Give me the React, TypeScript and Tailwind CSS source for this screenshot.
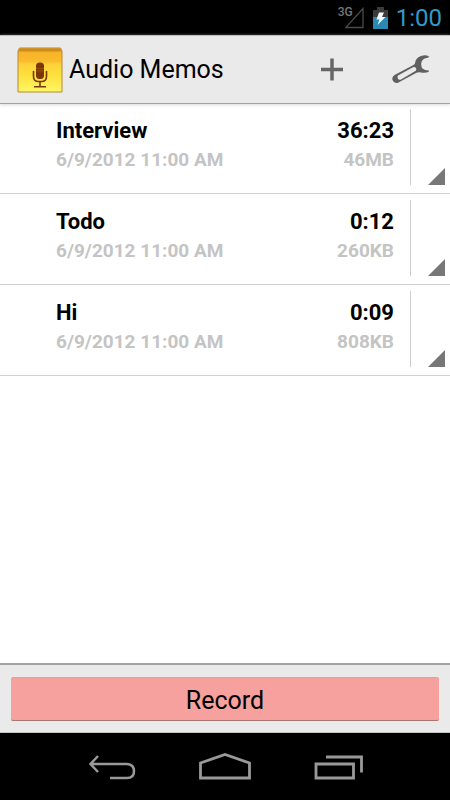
const memos = [
    { title: "Interview", date: "6/9/2012 11:00 AM", length: "36:23", size: "46MB" },
    { title: "Todo", date: "6/9/2012 11:00 AM", length: "0:12", size: "260KB" },
    { title: "Hi", date: "6/9/2012 11:00 AM", length: "0:09", size: "808KB" },
]

const StatusBar = () => {
    return (
        <div className="flex h-[35px] shrink-0 items-center justify-end bg-black pr-2">
            <span className="self-start pt-1 text-[12px] leading-4 font-medium text-[#777777]">3G</span>
            <svg className="mr-2 -ml-2" width="20" height="22" viewBox="0 0 20 22" fill="none">
                <path d="M18 1.500V20.500H0.800Z" stroke="#4a4a4a" strokeWidth="1.3" />
            </svg>
            <svg className="mr-2" width="15" height="22" viewBox="0 0 15 22">
                <path d="M4 0h7v3h4v8H0V3h4z" fill="#3b3b3b" />
                <path d="M0 10h15v12H0z" fill="#2a89b2" />
                <path d="M6 5.500h5L9 10h3.500L4.500 18l2-5.500H3.500z" fill="#f4f8fa" />
            </svg>
            <span className="text-[24px] leading-8 text-[#3598c8]">1:00</span>
        </div>
    )
}

const MemoIcon = () => {
    return (
        <svg width="46" height="46" viewBox="0 0 46 46">
            <defs>
                <linearGradient id="note" x1="0" y1="0" x2="0" y2="1">
                    <stop offset="0" stopColor="#f5b02a" />
                    <stop offset="0.3" stopColor="#fabb2c" />
                    <stop offset="0.36" stopColor="#fdd03a" />
                    <stop offset="0.6" stopColor="#fde03c" />
                    <stop offset="1" stopColor="#fff766" />
                </linearGradient>
            </defs>
            <path d="M1 4L2.500 1H43.500L45 4V45H1z" fill="url(#note)" stroke="#b5893a" />
            <path d="M1.500 4.500L3 1.500H43L44.500 4.500z" fill="#cf8a1c" />
            <rect x="19" y="15.500" width="8" height="16.500" rx="3.500" fill="#7c3605" />
            <path d="M19 21.500h8M19 24h8" stroke="#a8601a" strokeWidth="0.6" />
            <path d="M16.500 24v5.500q0 5 5 5h3q5 0 5-5V24M23 34.500v5M17 39.800h12" fill="none" stroke="#7c3605" strokeWidth="1.600" />
        </svg>
    )
}

const Header = () => {
    return (
        <header className="relative flex h-[69px] shrink-0 items-center border-t border-b border-t-[#bcbcbc] border-b-[#a2a2a2] bg-[#eaeaea] pr-[19px] pl-[17px] shadow-[0_1px_3px_#dcd6dc]">
            <MemoIcon />
            <h1 className="ml-1.5 flex-1 text-[25px] leading-8 text-black">Audio Memos</h1>
            <button aria-label="Add memo" className="mr-12">
                <svg width="24" height="24" viewBox="0 0 24 24">
                    <path d="M12 0.500v22M1 11.500H23" stroke="#666666" strokeWidth="3.500" />
                </svg>
            </button>
            <button aria-label="Settings">
                <svg width="39" height="30" viewBox="0 0 39 30">
                    <path
                        d="M37.500 2Q36 0 32.500 0.200Q28.500 0.500 26 2.500Q23.500 4.500 23.200 7.500Q23 9 21.500 10L2.500 20Q-0.500 22 0.500 25Q2 29 6 27.700L24.500 17.800Q26 17 28 17.200Q33 18.500 36.800 16.800V15.500Q32.500 15.500 30.500 13.500Q29 11.500 29.200 8.500Q29.500 5.500 32 3.800Q34.500 3 37.500 2ZM6 20.600L21 12.200Q23.800 11.500 24.300 14Q24.400 15.500 23 16.300L9 24.400Q6.800 25.500 5.800 23.500Q5.200 21.600 6 20.600Z"
                        fill="#606060"
                        fillRule="evenodd"
                    />
                </svg>
            </button>
        </header>
    )
}

const MemoList = () => {
    return (
        <ul className="-mt-px flex-1 bg-white">
            {memos.map((memo) => (
                <li key={memo.title} className="flex h-[91px] border-b border-[#d2d2d2] pr-[5px] pl-14">
                    <div className="flex flex-1 flex-col pt-3.5">
                        <div className="flex justify-between text-[22px] leading-7 font-bold text-black">
                            <span>{memo.title}</span>
                            <span>{memo.length}</span>
                        </div>
                        <div className="flex justify-between text-[19px] leading-[30px] font-bold text-[#c4c4c4]">
                            <span>{memo.date}</span>
                            <span>{memo.size}</span>
                        </div>
                    </div>
                    <button aria-label={`Options for ${memo.title}`} className="mt-1.5 mb-2 ml-4 flex w-[35px] items-end justify-end border-l border-[#cccccc]">
                        <svg width="17" height="17" viewBox="0 0 17 17">
                            <path d="M17 0v17H0z" fill="#777777" />
                        </svg>
                    </button>
                </li>
            ))}
        </ul>
    )
}

const NavBar = () => {
    return (
        <nav className="flex h-[67px] shrink-0 items-center justify-center gap-[62px] bg-black">
            <button aria-label="Back">
                <svg width="52" height="30" viewBox="0 0 52 30" fill="none" stroke="#999999" strokeWidth="2.500">
                    <path d="M13 4L5.500 12L13 20M5.500 12H42Q49 12.500 49 19Q49 26 42 26H25" />
                </svg>
            </button>
            <button aria-label="Home">
                <svg width="52" height="30" viewBox="0 0 52 30" fill="none" stroke="#999999" strokeWidth="2.800">
                    <path d="M1.500 26V11L26 2.500L50.500 11V26Z" />
                </svg>
            </button>
            <button aria-label="Recent apps">
                <svg width="52" height="30" viewBox="0 0 52 30" fill="none" stroke="#999999" strokeWidth="2.800">
                    <path d="M3 12H40.500V26H3ZM13 5H48.500V20.500" />
                </svg>
            </button>
        </nav>
    )
}

const App = () => {
    return (
        <div className="flex min-h-screen flex-col bg-white font-[Roboto,sans-serif]">
            <StatusBar />
            <Header />
            <MemoList />
            <footer className="border-t-2 border-b border-t-[#a2a2a2] border-b-[#c4c4c4] bg-[#eaeaea] px-[11px] pt-3 pb-[11px]">
                <button className="block h-11 w-full rounded-xs border-t border-b border-t-[#ef9a96] border-b-[#a87672] bg-[#f6a19d] pt-1 text-[25px] leading-8 text-black">
                    Record
                </button>
            </footer>
            <NavBar />
        </div>
    )
}
export default App
